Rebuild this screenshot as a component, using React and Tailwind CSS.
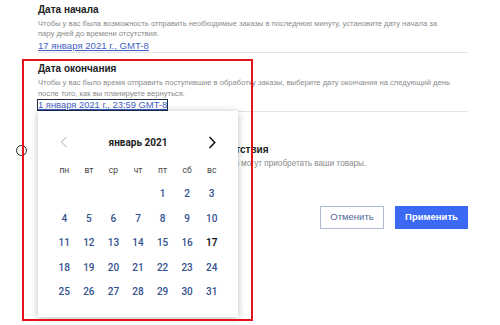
import React from "react";

const weekdays = ["пн", "вт", "ср", "чт", "пт", "сб", "вс"];

// январь 2021 начинается с пятницы
const days = [null, null, null, null, ...Array.from({ length: 31 }, (_, i) => i + 1)];

const Calendar = () => {
  return (
    <div
      className="absolute left-[38px] top-[111px] w-[200px] h-[206px] bg-white shadow-[0_1px_7px_rgba(0,0,0,0.28)] px-[14px] pt-[19px]"
      style={{ fontFamily: "Roboto, 'Liberation Sans', sans-serif" }}
    >
      {/* header */}
      <div className="grid grid-cols-7 h-[24px] items-center">
        <div className="flex justify-center">
          <svg width="8" height="12" viewBox="0 0 8 12" fill="none">
            <path d="M6.5 1 L1.5 6 L6.5 11" stroke="#d0d0d0" strokeWidth="1.3" />
          </svg>
        </div>
        <div className="col-span-5 text-center text-[10px] font-bold text-[#222]">
          январь 2021
        </div>
        <div className="flex justify-center">
          <svg width="8" height="13" viewBox="0 0 8 13" fill="none">
            <path d="M1.5 1 L6.8 6.5 L1.5 12" stroke="#111" strokeWidth="1.5" />
          </svg>
        </div>
      </div>
      {/* weekdays */}
      <div className="grid grid-cols-7 h-[24px] mt-[4px] items-center">
        {weekdays.map((w) => (
          <div key={w} className="text-center text-[8.5px] leading-[12px] text-[#444]">
            {w}
          </div>
        ))}
      </div>
      {/* days */}
      <div className="grid grid-cols-7 auto-rows-[24.5px] items-center">
        {days.map((d, i) => (
          <div
            key={i}
            className={
              d === 17
                ? "text-center text-[10px] leading-[12px] font-semibold text-[#111]"
                : "text-center text-[10px] leading-[12px] font-medium text-[#34528f]"
            }
          >
            {d}
          </div>
        ))}
      </div>
    </div>
  );
};

export default function App() {
  return (
    <div
      className="relative w-[500px] h-[325px] bg-white overflow-hidden"
      style={{ fontFamily: "'Liberation Sans', Arial, sans-serif" }}
    >
      <div className="pl-[38px] w-[468px] pt-[3px]">
        {/* Дата начала */}
        <div className="border-b border-[#e4e4e4]">
          <div className="text-[10px] leading-[14px] font-bold text-[#222]">Дата начала</div>
          <p className="mt-[2px] text-[7.6px] leading-[10px] text-[#8a8a8a]">
            Чтобы у вас была возможность отправить необходимые заказы в последнюю минуту, установите дату начала за
            <br />
            пару дней до времени отсутствия.
          </p>
          <div className="mt-[1px] text-[9.6px] leading-[12px]">
            <a className="text-[#3f5fc4] underline">17 января 2021 г., GMT-8</a>
          </div>
        </div>

        {/* Дата окончания */}
        <div className="border-b border-[#e4e4e4] mt-[9px]">
          <div className="text-[10px] leading-[14px] font-bold text-[#222]">Дата окончания</div>
          <p className="mt-[2px] text-[7.6px] leading-[10.5px] text-[#8a8a8a]">
            Чтобы у вас было время отправить поступившие в обработку заказы, выберите дату окончания на следующий день
            <br />
            после того, как вы планируете вернуться.
          </p>
          <div className="text-[9.4px] leading-[10px]">
            <a className="inline-block -ml-[1px] border border-[#1b2a48] text-[#3f5fc4] underline">
              1 января 2021 г., 23:59 GMT-8
            </a>
          </div>
        </div>

        {/* Режим отсутствия */}
        <div className="mt-[31px] flex items-start -ml-[22px] gap-[11px]">
          <div className="mt-[2px] w-[11px] h-[11px] rounded-full border border-[#222] bg-white shrink-0" />
          <div>
            <div className="text-[10px] leading-[14px] font-bold text-[#222]">
              Показывать объявления во время отсутствия
            </div>
            <p className="mt-[2px] text-[8.2px] leading-[10px] text-[#8a8a8a]">
              Если включить этот параметр, покупатели всё равно могут приобретать ваши товары.
            </p>
          </div>
        </div>

        {/* кнопки */}
        <div className="mt-[37px] flex justify-end gap-[11px]">
          <button className="w-[64px] h-[23px] border border-[#aebbd0] text-[9.5px] text-[#52699a] bg-white">
            Отменить
          </button>
          <button className="w-[73px] h-[23px] bg-[#3b69f3] text-[9.5px] font-bold text-white">
            Применить
          </button>
        </div>
      </div>

      <Calendar />

      {/* красная рамка */}
      <div className="absolute left-[22px] top-[59px] w-[231px] h-[262px] border-2 border-[#e0141a]" />
    </div>
  );
}
